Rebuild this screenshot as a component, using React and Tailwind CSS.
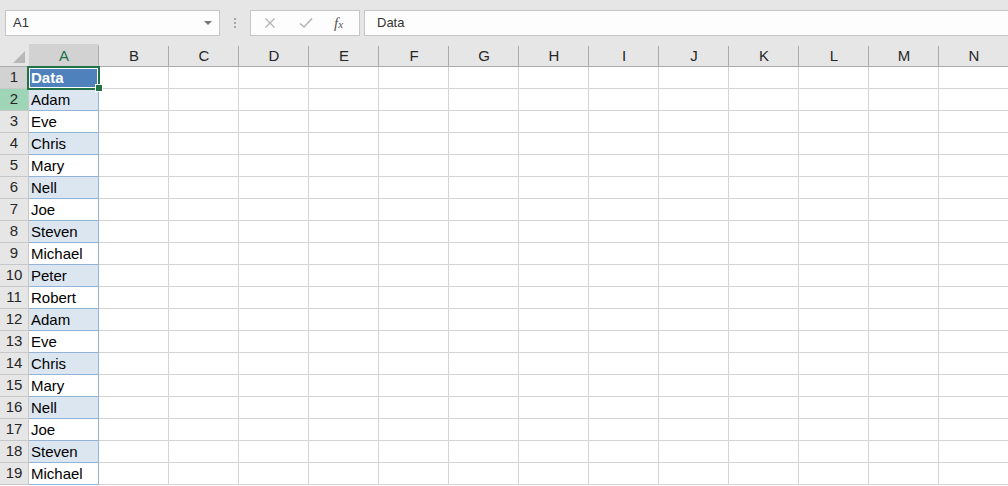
import React from "react";

const cols = ["A","B","C","D","E","F","G","H","I","J","K","L","M","N"];
const names = ["Data","Adam","Eve","Chris","Mary","Nell","Joe","Steven","Michael","Peter","Robert","Adam","Eve","Chris","Mary","Nell","Joe","Steven","Michael"];

export default function App() {
  return (
    <div className="w-[1008px] h-[486px] overflow-hidden bg-white" style={{ fontFamily: '"Liberation Sans", Arial, sans-serif' }}>
      {/* formula bar */}
      <div className="h-[44px] bg-[#e6e6e6] flex items-start pt-[10px]">
        <div className="ml-[5px] w-[215px] h-[26px] bg-[#fdfdfd] border border-[#c6c6c6] flex items-center justify-between pl-[7px] pr-[6px]">
          <span className="text-[13px] text-[#333]">A1</span>
          <svg width="10" height="6" viewBox="0 0 10 6"><path d="M1 1h8L5 5z" fill="#767676" /></svg>
        </div>
        <div className="w-[30px] h-[26px] flex flex-col items-center justify-center gap-[2px]">
          <div className="w-[2px] h-[2px] bg-[#a6a6a6]" />
          <div className="w-[2px] h-[2px] bg-[#a6a6a6]" />
          <div className="w-[2px] h-[2px] bg-[#a6a6a6]" />
        </div>
        <div className="w-[110px] h-[26px] bg-[#fdfdfd] border border-[#c6c6c6] flex items-center">
          <svg className="ml-[13px]" width="12" height="12" viewBox="0 0 12 12"><path d="M1.5 1.5l9 9M10.5 1.5l-9 9" stroke="#b4b4b4" strokeWidth="1.3" /></svg>
          <svg className="ml-[23px]" width="14" height="12" viewBox="0 0 14 12"><path d="M1 6.5l4 3.5L13 1.5" stroke="#b4b4b4" strokeWidth="1.6" fill="none" /></svg>
          <span className="ml-[21px] text-[15px] italic text-[#555]" style={{ fontFamily: '"Liberation Serif", serif' }}>f<span className="text-[11px]">x</span></span>
        </div>
        <div className="ml-[4px] flex-1 h-[26px] bg-[#fdfdfd] border border-[#c6c6c6] border-r-0 flex items-center pl-[12px]">
          <span className="text-[13px] text-[#333]">Data</span>
        </div>
      </div>
      {/* header row */}
      <div className="flex h-[23px] bg-[#e6e6e6] border-b border-[#ababab]">
        <div className="w-[29px] shrink-0 relative">
          <svg className="absolute left-[13px] top-[7px]" width="12" height="12" viewBox="0 0 12 12"><path d="M12 0V12H0z" fill="#b8b8b8" /></svg>
        </div>
        {cols.map((c, i) => (
          <div key={c} className={`w-[70px] shrink-0 flex items-end justify-center pb-[1px] relative ${i === 0 ? "bg-[#d2d2d2] text-[#217346]" : "text-[#262626]"}`}>
            <span className="text-[15px] leading-[18px]">{c}</span>
            <div className="absolute right-0 top-[2px] bottom-0 w-px bg-[#ababab]" />
          </div>
        ))}
      </div>
      {/* rows */}
      {names.map((n, r) => {
        const isHeader = r === 0;
        const blue = r % 2 === 1;
        return (
          <div key={r} className="flex h-[22px]">
            <div className={`w-[29px] shrink-0 border-b border-r border-[#c8c8c8] flex items-center justify-center text-[15px] text-[#262626] ${r === 0 ? "bg-[#d2d2d2]" : r === 1 ? "bg-[#9fd5b7]" : "bg-[#e6e6e6]"}`}>
              {r + 1}
            </div>
            <div className={`w-[70px] shrink-0 relative flex items-center pl-[2px] pt-[1px] border-b border-r ${isHeader ? "bg-[#4f81bd] border-[#4f81bd] z-10" : blue ? "bg-[#dce6f1] border-[#95b3d7]" : "bg-white border-[#95b3d7]"}`}>
              <span className={`text-[15px] ${isHeader ? "font-bold text-white" : "text-black"}`}>{n}</span>
              {isHeader && (
                <>
                  <div className="absolute -left-[2px] -top-[1px] w-[73px] h-[24px] border-2 border-[#217346] pointer-events-none" />
                  <div className="absolute left-0 top-[1px] w-[69px] h-[20px] border border-white pointer-events-none" />
                  <div className="absolute left-[66px] top-[17px] w-[6px] h-[6px] bg-[#217346] border border-white box-content" />
                </>
              )}
            </div>
            {cols.slice(1).map((c) => (
              <div key={c} className="w-[70px] shrink-0 border-b border-r border-[#d4d4d4]" />
            ))}
          </div>
        );
      })}
    </div>
  );
}
